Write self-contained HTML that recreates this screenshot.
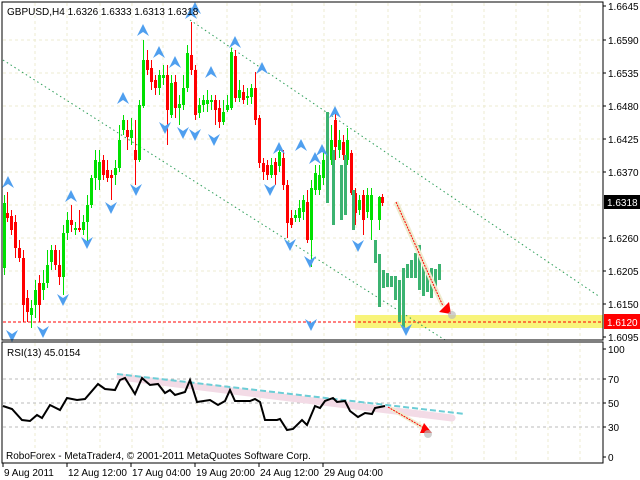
<!DOCTYPE html>
<html><head><meta charset="utf-8"><style>
html,body{margin:0;padding:0;background:#fff;width:640px;height:480px;overflow:hidden}
svg{display:block;font-family:"Liberation Sans",sans-serif;font-size:10px}
</style></head><body>
<svg id="s" width="640" height="480" xmlns="http://www.w3.org/2000/svg">
<rect width="640" height="480" fill="#fff"/>
<g id="grid" stroke="#ecebd0" stroke-dasharray="3,3" stroke-width="1"></g>
<rect x="355" y="315" width="248" height="13" fill="#f8f47a"/>
<line x1="3" y1="322" x2="603" y2="322" stroke="#f00" stroke-dasharray="3,2"/>
<g stroke="#2e9e5a" stroke-dasharray="1.5,3" stroke-width="1">
<line x1="190" y1="20" x2="600" y2="297"/>
<line x1="3" y1="60" x2="445" y2="340"/>
</g>
<g id="c"></g>
<g id="f" fill="#4f9fef"></g>
<line x1="396" y1="202" x2="443" y2="306" stroke="#eeeccf" stroke-width="5"/>
<line x1="396" y1="202" x2="443" y2="306" stroke="#f00" stroke-dasharray="2,1"/>
<polygon points="439,312 451,314 449,302" fill="#f00"/>
<circle cx="452" cy="315" r="4" fill="#bbb" opacity=".7"/>
<rect x="2" y="2" width="601" height="338" fill="none" stroke="#000"/>
<rect x="2" y="342" width="601" height="121" fill="none" stroke="#000"/>
<g stroke="#bbb" stroke-dasharray="3,3"><line x1="3" y1="379" x2="602" y2="379"/><line x1="3" y1="403" x2="602" y2="403"/><line x1="3" y1="427" x2="602" y2="427"/></g>
<line x1="120" y1="377" x2="452" y2="418" stroke="#f3dbe6" stroke-width="7" stroke-linecap="round"/>
<line x1="117" y1="374" x2="465" y2="414" stroke="#6ccdd6" stroke-width="2" stroke-dasharray="6,3"/>
<polyline fill="none" stroke="#000" stroke-width="2" points="3,406 12,409 22,420 30,421 37,415 42,418 50,405 60,410 67,398 77,400 85,399 98,384 105,389 115,390 120,380 125,378 130,386 135,394 142,378 150,385 158,384 165,393 170,390 175,395 185,392 190,380 197,402 210,400 218,405 225,401 230,390 235,401 250,401 255,399 260,402 265,420 277,420 280,419 287,430 293,429 302,420 307,425 315,406 320,408 325,401 333,398 337,402 345,401 350,411 358,417 365,413 372,414 375,408 380,407 385,406"/>
<line x1="390" y1="408" x2="424" y2="428" stroke="#eeeccf" stroke-width="4"/>
<line x1="388" y1="407" x2="424" y2="428" stroke="#f00" stroke-dasharray="2,1"/>
<polygon points="420,433 432,433 424,423" fill="#f00"/>
<circle cx="428" cy="434" r="4" fill="#bbb" opacity=".7"/>
<g fill="#000">
<text x="7" y="15">GBPUSD,H4  1.6326 1.6333 1.6313 1.6318</text>
<text x="7" y="356">RSI(13) 45.0154</text>
<text x="6" y="459">RoboForex - MetaTrader4, © 2001-2011 MetaQuotes Software Corp.</text>
</g>
<g id="ax" fill="#000"></g>
<rect x="604" y="195" width="36" height="14" fill="#000"/>
<text x="607" y="206" fill="#fff">1.6318</text>
<rect x="604" y="314" width="36" height="15" fill="#f00"/>
<text x="607" y="326" fill="#fff">1.6120</text>
</svg>
<script>
var NS="http://www.w3.org/2000/svg";
function el(p,t,a,txt){var e=document.createElementNS(NS,t);for(var k in a)e.setAttribute(k,a[k]);if(txt)e.textContent=txt;document.getElementById(p).appendChild(e);return e;}
var vx=[35,67,100,132,163,197,227,260,292,324,356,388,420,452,484,516,548,580];
vx.forEach(function(x){el("grid","line",{x1:x,y1:3,x2:x,y2:340});el("grid","line",{x1:x,y1:343,x2:x,y2:462});});
var hy=[40,73,106,139,172,205,238,271,304];
hy.forEach(function(y){el("grid","line",{x1:3,y1:y,x2:602,y2:y});});
var pl=[["1.6645",6],["1.6590",40],["1.6535",73],["1.6480",106],["1.6425",139],["1.6370",172],["1.6260",238],["1.6205",271],["1.6150",304],["1.6095",337]];
pl.forEach(function(p){el("ax","line",{x1:603,y1:p[1],x2:606,y2:p[1],stroke:"#000"});el("ax","text",{x:608,y:p[1]+4},p[0]);});
[["100",349],["70",379],["50",403],["30",427],["0",457]].forEach(function(p){el("ax","line",{x1:603,y1:p[1],x2:606,y2:p[1],stroke:"#000"});el("ax","text",{x:608,y:p[1]+4},p[0]);});
[["9 Aug 2011",3],["12 Aug 12:00",67],["17 Aug 04:00",131],["19 Aug 20:00",195],["24 Aug 12:00",259],["29 Aug 04:00",323]].forEach(function(d){el("ax","line",{x1:d[1],y1:463,x2:d[1],y2:467,stroke:"#000"});el("ax","text",{x:d[1]+1,y:476},d[0]);});
var C=[[4,203,268,'g',195,275],[7,213,218,'r',192,222],[11,216,230,'r',210,235],[15,222,248,'r',215,258],[19,248,258,'r',240,262],[23,258,305,'r',250,322],[27,298,312,'r',290,322],[31,308,315,'g',300,328],[35,290,305,'g',280,318],[39,283,305,'r',275,322],[43,283,290,'g',270,300],[47,265,283,'g',250,288],[51,250,262,'g',245,270],[55,250,265,'r',245,270],[59,265,277,'r',250,285],[63,233,277,'g',225,295],[67,220,233,'g',212,240],[71,220,225,'r',205,232],[75,228,230,'g',222,235],[79,228,230,'r',210,232],[83,222,230,'g',215,235],[87,205,222,'g',195,242],[91,178,205,'g',175,208],[95,160,178,'g',150,190],[99,162,180,'g',150,190],[103,160,175,'r',155,180],[107,170,178,'r',160,182],[111,175,178,'r',170,200],[115,168,175,'g',160,185],[119,140,168,'g',125,172],[123,120,130,'g',115,135],[127,130,137,'r',120,150],[131,130,138,'g',118,145],[135,150,160,'r',120,185],[139,105,160,'g',100,162],[143,60,106,'g',40,108],[147,60,70,'r',50,75],[151,68,82,'r',60,90],[155,80,88,'r',75,95],[159,75,88,'g',70,95],[163,75,78,'g',65,85],[167,75,110,'r',65,145],[171,83,115,'g',75,118],[175,82,108,'r',75,118],[179,104,108,'g',95,125],[183,88,105,'g',75,110],[187,53,88,'g',45,92],[191,55,70,'r',22,75],[195,70,115,'r',65,120],[199,105,113,'g',98,118],[203,100,105,'g',95,112],[207,100,104,'g',90,112],[211,100,102,'g',95,110],[215,100,110,'r',95,125],[219,108,122,'r',100,128],[223,112,122,'g',100,125],[227,105,110,'g',95,112],[231,52,108,'g',48,110],[235,56,98,'r',50,102],[239,90,98,'g',80,102],[243,92,100,'r',85,104],[247,96,98,'g',88,105],[251,88,97,'g',84,104],[255,88,120,'r',72,125],[259,118,163,'r',115,168],[263,163,172,'r',158,180],[267,165,175,'r',160,180],[271,165,175,'g',158,178],[275,162,175,'r',158,185],[279,152,166,'g',145,172],[283,158,185,'r',150,190],[287,185,223,'r',180,238],[291,218,225,'r',210,228],[295,215,218,'g',210,222],[299,208,218,'g',200,222],[303,200,212,'g',195,220],[307,202,240,'r',190,243],[311,188,240,'g',180,267],[315,173,190,'g',165,195],[319,175,190,'g',165,195],[323,160,178,'g',150,185],[331,140,160,'g',125,165],[335,120,147,'r',110,160],[339,140,150,'g',130,158],[343,142,155,'r',135,160],[347,140,160,'g',128,165],[351,153,193,'r',150,195],[355,193,213,'r',188,225],[359,200,210,'g',195,215],[363,195,220,'r',190,235],[367,195,212,'g',188,218],[371,195,220,'g',188,240],[379,197,220,'g',196,230],[382,197,203,'r',194,206]];
C.forEach(function(c){var col=c[3]=='g'?'#00e000':'#f00';
el("c","line",{x1:c[0]+.5,y1:c[4],x2:c[0]+.5,y2:c[5],stroke:col});
el("c","rect",{x:c[0]-1,y:c[1],width:3,height:Math.max(1,c[2]-c[1]),fill:col});});
var B=[[327,112,203],[333,150,225],[341,165,220],[345,155,215],[353,190,230],[375,240,263],[379,254,307],[383,270,288],[387,273,287],[391,276,287],[395,276,300],[399,280,322],[403,268,328],[407,264,278],[411,260,278],[415,253,278],[419,245,290],[423,262,296],[427,270,292],[431,268,298],[435,269,290],[439,264,280]];
B.forEach(function(b){el("c","rect",{x:b[0]-1,y:b[1],width:3,height:b[2]-b[1],fill:"#3cb371"});});
var U=[[8,182],[71,196],[123,98],[143,30],[159,52],[175,62],[191,13],[211,72],[235,42],[262,68],[279,148],[315,158],[335,112],[322,150],[301,145],[195,8]];
U.forEach(function(u){var x=u[0],y=u[1];el("f","polygon",{points:(x-6)+","+(y+6)+" "+x+","+(y-6)+" "+(x+6)+","+(y+6)+" "+x+","+(y+2)});});
var D=[[12,336],[43,332],[63,300],[87,243],[111,208],[136,190],[165,128],[183,133],[214,140],[195,135],[290,245],[270,190],[358,246],[310,262],[311,325],[406,330]];
D.forEach(function(u){var x=u[0],y=u[1];el("f","polygon",{points:(x-6)+","+(y-6)+" "+x+","+(y+6)+" "+(x+6)+","+(y-6)+" "+x+","+(y-2)});});
</script>
</body></html>
